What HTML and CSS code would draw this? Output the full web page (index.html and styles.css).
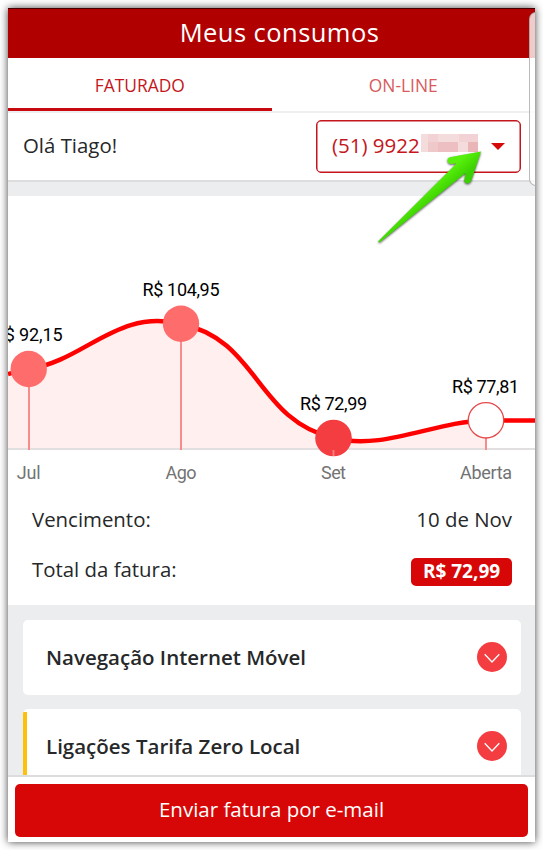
FILE: index.html
```html
<!DOCTYPE html>
<html lang="pt-BR">
<head>
    <meta charset="UTF-8">
    <meta name="viewport" content="width=device-width, initial-scale=1.0">
    <title>Meus consumos</title>
    <link rel="stylesheet" href="styles.css">
</head>
<body>
    <div class="app">

        <!-- ======= Header ======= -->
        <header class="title-bar">
            <h1>Meus consumos</h1>
        </header>

        <nav class="tabs">
            <a class="tab active">FATURADO</a>
            <a class="tab">ON-LINE</a>
        </nav>

        <section class="greeting">
            <span class="hello">Olá Tiago!</span>
            <div class="phone-select">
                <span class="number">(51) 9922</span>
                <svg class="mask" width="57" height="18" viewBox="0 0 57 18" shape-rendering="crispEdges">
                    <rect width="57" height="18" fill="#f4dcdd"/>
                    <path d="M7 0h10v8H7zM38 0h19v8H38z" fill="#f2d2d4"/>
                    <path d="M7 8h10v10H7z" fill="#efc8ca"/>
                    <path d="M17 8h20v10H17z" fill="#eebfc2"/>
                    <path d="M47 8h10v10H47z" fill="#eab5b7"/>
                </svg>
                <svg class="caret" width="14" height="7" viewBox="0 0 14 7"><path d="M0 0h14L7 7z" fill="#d60808"/></svg>
            </div>
        </section>

        <!-- ======= Chart ======= -->
        <section class="chart">
            <svg width="527" height="300" viewBox="8 196 527 300">
                <path class="area" d="M8 374C15 372 22 371 28.5 369C85 361 117 308 181 324C258 339 256 420 333.5 438C384 451 435 421 486 420.5V448H8z"/>
                <path class="axis" d="M8 449H535"/>
                <path class="line" d="M8 374C15 372 22 371 28.5 369C85 361 117 308 181 324C258 339 256 420 333.5 438C384 451 435 421 486 420.5H535"/>
                <path class="stem" d="M29 369V450M181 324V450M486 420V450"/>
                <circle class="dot" cx="28.7" cy="369" r="18.2"/>
                <circle class="dot" cx="181" cy="323.7" r="18.2"/>
                <circle class="dot selected" cx="333.5" cy="438" r="18.3"/>
                <path class="stem" d="M333.5 450V456"/>
                <circle class="dot open" cx="486" cy="420.3" r="17.7"/>
                <g class="values">
                    <text x="28.2" y="341" textLength="69">R$ 92,15</text>
                    <text x="181" y="295.5" textLength="77">R$ 104,95</text>
                    <text x="333.5" y="410" textLength="67">R$ 72,99</text>
                    <text x="485.5" y="392.5" textLength="67">R$ 77,81</text>
                </g>
                <g class="months">
                    <text x="28.7" y="479" textLength="24">Jul</text>
                    <text x="181" y="479" textLength="31">Ago</text>
                    <text x="333.5" y="479" textLength="25">Set</text>
                    <text x="486" y="479" textLength="52">Aberta</text>
                </g>
            </svg>
        </section>

        <section class="summary">
            <div class="row">
                <span>Vencimento:</span>
                <span>10 de Nov</span>
            </div>
            <div class="row">
                <span>Total da fatura:</span>
                <b class="total">R$ 72,99</b>
            </div>
        </section>

        <!-- ======= Details ======= -->
        <main class="details">
            <div class="card">
                <span>Navegação Internet Móvel</span>
                <svg width="30" height="30" viewBox="0 0 30 30"><circle cx="15" cy="15" r="15"/><path d="M7.7 12.2L15 20l7.3-7.8"/></svg>
            </div>
            <div class="card marked">
                <span>Ligações Tarifa Zero Local</span>
                <svg width="30" height="30" viewBox="0 0 30 30"><circle cx="15" cy="15" r="15"/><path d="M7.7 12.2L15 20l7.3-7.8"/></svg>
            </div>
        </main>

        <footer class="footer">
            <button class="send">Enviar fatura por e-mail</button>
        </footer>

        <div class="edge-panel"></div>
    </div>

    <svg class="arrow" width="112" height="100" viewBox="374 147 112 100">
        <defs>
            <linearGradient id="green" gradientUnits="userSpaceOnUse" x1="424" y1="190" x2="434" y2="202">
                <stop offset="0" stop-color="#58f00c"/>
                <stop offset="1" stop-color="#3bd000"/>
            </linearGradient>
        </defs>
        <path d="M378 241.5L456.5 163.5L451 164Q447 163 447.500 160Q447.500 157.500 451 157L481 151.500L471.500 180Q470 183.500 467 183.500Q463.500 182.500 464.500 179L465.500 173L379.500 242.500Z"/>
    </svg>
</body>
</html>
```

FILE: styles.css
```css
* {
    box-sizing: border-box;
}

body {
    margin: 0;
    padding: 8px;
    background-color: #fff;
    font-family: "Open Sans", sans-serif;
    color: #262829;
}

.app {
    position: relative;
    display: flex;
    flex-direction: column;
    width: 527px;
    height: 834px;
    overflow: hidden;
    background-color: #fff;
}

body::before {
    content: "";
    position: absolute;
    left: 8px;
    top: 8px;
    width: 527px;
    height: 834px;
    box-shadow: 0 0 8px rgba(0, 0, 0, 0.75);
}

/* Header */
.title-bar {
    flex: none;
    height: 50px;
    border-top: 1px solid #400;
    background-color: #b00000;
    color: #fff;
    text-align: center;
}

h1 {
    margin: 0 0 0 16px;
    font-size: 25.5px;
    font-weight: 400;
    letter-spacing: 0.45px;
    line-height: 46px;
}

.tabs {
    flex: none;
    display: flex;
    height: 55px;
    border-bottom: 2px solid #eeeff0;
}

.tab {
    flex: 1;
    height: 53px;
    padding-top: 1px;
    color: #d75a5c;
    font-size: 17.4px;
    line-height: 53px;
    text-align: center;
}

.tab.active {
    border-bottom: 3px solid #c80a10;
    color: #c4161c;
}

.greeting {
    flex: none;
    display: flex;
    align-items: flex-start;
    justify-content: space-between;
    height: 69px;
    padding: 7px 14px 0 15px;
    border-bottom: 2px solid #dcdddf;
}

.hello {
    font-size: 20.4px;
    line-height: 50px;
}

.phone-select {
    display: flex;
    align-items: center;
    width: 205px;
    height: 53px;
    padding-left: 15px;
    border: 1.5px solid #c4161c;
    border-radius: 5px;
    box-shadow: inset 0 0 0 0.5px #c4161c;
    color: #c4161c;
    font-size: 20.5px;
}

.number {
    width: 89px;
    padding-bottom: 3px;
    line-height: 47px;
    white-space: nowrap;
}

.mask {
    margin-bottom: 8px;
}

.caret {
    margin-left: 13px;
}

/* Chart */
.chart {
    flex: none;
    height: 314px;
    border-top: 14px solid #ecedef;
}

.chart svg {
    display: block;
}

.area {
    fill: #fff0ef;
}

.axis {
    stroke: #e1dfdf;
    stroke-width: 2;
}

.line {
    fill: none;
    stroke: #f00;
    stroke-width: 4.5;
}

.stem {
    stroke: #f98080;
    stroke-width: 1.8;
}

.dot {
    fill: #ff6c6c;
}

.dot.selected {
    fill: #f43d40;
}

.dot.open {
    fill: #fff;
    stroke: #e44a4c;
    stroke-width: 1.3;
}

.chart text {
    font-family: Roboto, sans-serif;
    font-size: 18px;
    text-anchor: middle;
}

.values {
    fill: #000;
}

.months {
    fill: #737373;
}

/* Invoice summary */
.summary {
    flex: none;
    height: 109px;
    padding: 0 23px 0 24px;
    font-size: 20.4px;
}

.row {
    display: flex;
    align-items: center;
    justify-content: space-between;
    height: 50px;
}

.row span {
    margin-bottom: 4px;
}

.total {
    width: 101px;
    height: 28px;
    margin-top: 2px;
    border-radius: 5px;
    background-color: #d80707;
    color: #fff;
    font-size: 19px;
    line-height: 27px;
    text-align: center;
}

/* Details */
.details {
    flex: 1;
    min-height: 0;
    overflow: hidden;
    padding: 15px 14px 0 15px;
    background-color: #ecedef;
}

.card {
    display: flex;
    align-items: center;
    justify-content: space-between;
    height: 75px;
    margin-bottom: 14px;
    padding: 0 14px 1px 23px;
    border-radius: 5px;
    background-color: #fff;
    font-size: 20.5px;
    font-weight: 600;
}

.card svg {
    fill: #f43d40;
}

.card path {
    fill: none;
    stroke: #fff;
    stroke-width: 1.3;
}

.marked {
    background-image: linear-gradient(#fdc10d, #fdc10d);
    background-position: 0 3px;
    background-size: 4px 100%;
    background-repeat: no-repeat;
}

.footer {
    flex: none;
    height: 67px;
    padding: 7px 7px 0;
    border-top: 2px solid #dcdddf;
    background-color: #fff;
}

.send {
    display: block;
    width: 100%;
    height: 53px;
    padding: 0 0 4px;
    border: 0;
    border-radius: 5px;
    background-color: #d80707;
    color: #fff;
    font-family: inherit;
    font-size: 20.5px;
}

/* Translucent handle over the right border */
.edge-panel {
    position: absolute;
    top: 4px;
    right: -12px;
    width: 18px;
    height: 174px;
    border: 1px solid rgba(140, 140, 140, 0.6);
    border-radius: 7px;
    background-color: rgba(255, 255, 255, 0.8);
}

.arrow {
    position: absolute;
    left: 374px;
    top: 147px;
    fill: url(#green);
    filter: drop-shadow(0 1px 1px rgba(0, 0, 0, 0.65));
}
```
